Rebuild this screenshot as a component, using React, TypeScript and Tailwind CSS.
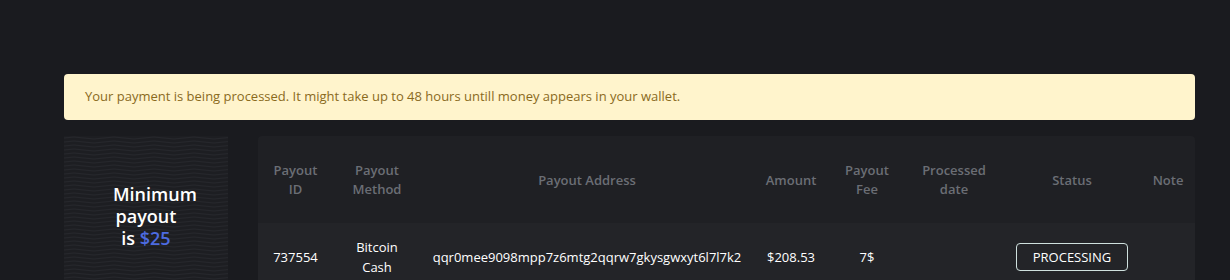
const cols = [
  { label: ['Payout', 'ID'], w: 'w-[75px]' },
  { label: ['Payout', 'Method'], w: 'w-[88px]' },
  { label: ['Payout Address'], w: 'w-[332px]' },
  { label: ['Amount'], w: 'w-[76px]' },
  { label: ['Payout', 'Fee'], w: 'w-[76px]' },
  { label: ['Processed', 'date'], w: 'w-[98px]' },
  { label: ['Status'], w: 'w-[138px]' },
  { label: ['Note'], w: 'w-[54px]' },
];

function Waves() {
  return (
    <svg className="absolute inset-0 h-full w-full" aria-hidden="true">
      <defs>
        <pattern id="wave" width="40" height="4" patternUnits="userSpaceOnUse">
          <path d="M0 2 Q10 0 20 2 T40 2" fill="none" stroke="#26272c" strokeWidth="1" />
        </pattern>
      </defs>
      <rect width="100%" height="100%" fill="url(#wave)" />
    </svg>
  );
}

export default function App() {
  return (
    <div className="min-h-[280px] bg-[#1a1b1f] pt-[74px] font-['Open_Sans',sans-serif] text-[13px]">
      <div className="mx-[64px] w-[1131px]">
        {/* alert */}
        <div className="h-[46px] rounded-[4px] bg-[#fff4cc] px-[21px] flex items-center text-[#8a6a1d]">
          Your payment is being processed. It might take up to 48 hours untill money appears in your wallet.
        </div>

        <div className="mt-[16px] flex gap-[30px]">
          {/* minimum payout panel */}
          <div className="relative w-[164px] shrink-0 h-[200px] bg-[#1d1e22] pt-[47px]">
            <Waves />
            <div className="relative mx-auto w-[66px] text-center text-[18px] leading-[22px] font-semibold text-white">
              Minimum payout is <span className="text-[#4d6be0]">$25</span>
            </div>
          </div>

          {/* payouts table */}
          <div className="flex-1 overflow-hidden rounded-t-[4px]">
            <table className="w-full table-fixed border-collapse text-center">
              <thead>
                <tr className="h-[87px] bg-[#1f2024]">
                  {cols.map((c, i) => (
                    <th key={i} className={`${c.w} pt-[1px] align-middle font-semibold leading-[19px] text-[#6b6e75]`}>
                      {c.label.map((l, j) => (
                        <div key={j}>{l}</div>
                      ))}
                    </th>
                  ))}
                </tr>
              </thead>
              <tbody>
                <tr className="h-[68px] bg-[#232428] text-white leading-[20px]">
                  <td>737554</td>
                  <td>
                    <div>Bitcoin</div>
                    <div>Cash</div>
                  </td>
                  <td>qqr0mee9098mpp7z6mtg2qqrw7gkysgwxyt6l7l7k2</td>
                  <td>$208.53</td>
                  <td>7$</td>
                  <td></td>
                  <td>
                    <span className="inline-flex h-[28px] w-[112px] items-center justify-center rounded-[4px] border border-[#cfe0de]">
                      PROCESSING
                    </span>
                  </td>
                  <td></td>
                </tr>
              </tbody>
            </table>
          </div>
        </div>
      </div>
    </div>
  );
}
